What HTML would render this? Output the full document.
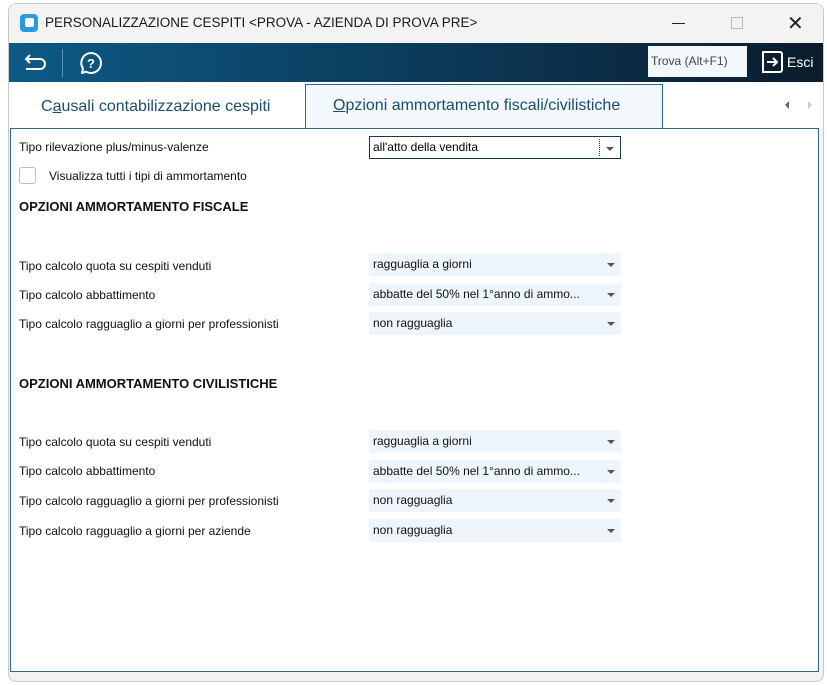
<!DOCTYPE html>
<html><head><meta charset="utf-8"><style>
body{margin:0;width:827px;height:685px;background:#fff;font-family:"Liberation Sans",sans-serif;position:relative;overflow:hidden}
.win{position:absolute;left:8px;top:3px;width:814px;height:677px;border:1px solid #c8c8c8;border-radius:8px;background:#f3f3f3;overflow:hidden}
.title{position:absolute;left:0;top:0;width:814px;height:39px;background:#f3f3f3;font-size:13.5px;color:#1a1a1a}
.tb{position:absolute;left:0;top:39px;width:814px;height:39px;background:linear-gradient(90deg,#0d5a85,#0c3552 60%,#0b1b2b)}
.tabs{position:absolute;left:0;top:78px;width:814px;height:47px;background:#fff}
.panel{position:absolute;left:1px;top:124px;width:807px;height:542px;border:1px solid #2e6a80;background:#fff}
.l{position:absolute;left:8px;font-size:12px;color:#111}
.dd{position:absolute;left:358px;width:252px;height:23px;background:#eef6fc;font-size:12px;line-height:23px;padding-left:4px;box-sizing:border-box;color:#111}
.dd:after{content:"";position:absolute;right:6px;top:10px;border:4px solid transparent;border-top:4px solid #555;border-bottom:0}
.h{position:absolute;left:8px;font-size:13px;font-weight:bold;color:#111}
</style></head><body>
<div class="win">
<div class="title">
 <div style="position:absolute;left:11px;top:10px;width:18px;height:18px;background:#2a9ae0;border-radius:4px"><div style="position:absolute;left:5px;top:4px;width:9px;height:9px;background:#fff;border-radius:2px"></div></div>
 <div style="position:absolute;left:36px;top:11px">PERSONALIZZAZIONE CESPITI &lt;PROVA - AZIENDA DI PROVA PRE&gt;</div>
 <div style="position:absolute;left:663px;top:19px;width:13px;height:1px;background:#222"></div>
 <div style="position:absolute;left:722px;top:13px;width:10px;height:10px;border:1px solid #bbb"></div>
 <div style="position:absolute;left:778px;top:7px;font-size:20px;color:#222">✕</div>
</div>
<div class="tb">
 <svg style="position:absolute;left:14px;top:9px" width="26" height="22" viewBox="0 0 26 22" fill="none" stroke="#fff" stroke-width="2"><path d="M7 3 L3 7 L7 11 M3 7 H17 a5 5 0 0 1 0 10 H3"/></svg>
 <div style="position:absolute;left:53px;top:6px;width:1px;height:28px;background:#5b8fae"></div>
 <svg style="position:absolute;left:70px;top:8px" width="24" height="24" viewBox="0 0 24 24" fill="none" stroke="#fff" stroke-width="2"><path d="M12 2 a10 10 0 1 1 -5 18.7 L3 22 L4 17.5 A10 10 0 0 1 12 2 Z" stroke-linejoin="round"/><text x="8" y="17" fill="#fff" stroke="none" font-size="13" font-weight="bold" font-family="Liberation Sans">?</text></svg>
 <div style="position:absolute;left:639px;top:3px;width:99px;height:31px;background:#f0f8fe;font-size:12px;line-height:31px;padding-left:3px;box-sizing:border-box;color:#444">Trova (Alt+F1)</div>
 <svg style="position:absolute;left:751px;top:7px" width="24" height="24" viewBox="0 0 24 24" fill="none" stroke="#fff" stroke-width="2"><path d="M9 2 H3 V22 H9 M9 2 H20 a2 2 0 0 1 2 2 V20 a2 2 0 0 1 -2 2 H9"/><path d="M7 12 H17 M13 8 L17 12 L13 16"/></svg>
 <div style="position:absolute;left:778px;top:11px;color:#fff;font-size:14px">Esci</div>
</div>
<div class="tabs">
 <div style="position:absolute;left:32px;top:16px;font-size:16px;color:#1b4e6b">C<u>a</u>usali contabilizzazione cespiti</div>
 <div style="position:absolute;left:296px;top:2px;width:358px;height:46px;border:1px solid #2e6a80;border-bottom:none;background:#f2f8fc;box-sizing:border-box"><div style="position:absolute;left:27px;top:12px;font-size:16px;color:#1b4e6b"><u>O</u>pzioni ammortamento fiscali/civilistiche</div></div>
 <div style="position:absolute;left:776px;top:19px;border:4px solid transparent;border-right:4px solid #666;border-left:0"></div>
 <div style="position:absolute;left:799px;top:19px;border:4px solid transparent;border-left:4px solid #ccc;border-right:0"></div>
</div>
<div class="panel">
 <div class="l" style="top:11px">Tipo rilevazione plus/minus-valenze</div>
 <div class="dd" style="top:7px;background:#fff;border:1px solid #1a3a50;width:252px"><div style="position:absolute;right:20px;top:2px;height:17px;border-left:1px dotted #333"></div></div>
 <div style="position:absolute;left:362px;top:7px;font-size:12px;line-height:23px">all'atto della vendita</div>
 <div style="position:absolute;left:8px;top:38px;width:15px;height:15px;border:1px solid #bbb;border-radius:3px"></div>
 <div class="l" style="top:40px;left:38px">Visualizza tutti i tipi di ammortamento</div>
 <div class="h" style="top:70px">OPZIONI AMMORTAMENTO FISCALE</div>
 <div class="l" style="top:130px">Tipo calcolo quota su cespiti venduti</div><div class="dd" style="top:124px">ragguaglia a giorni</div>
 <div class="l" style="top:159px">Tipo calcolo abbattimento</div><div class="dd" style="top:154px">abbatte del 50% nel 1°anno di ammo...</div>
 <div class="l" style="top:188px">Tipo calcolo ragguaglio a giorni per professionisti</div><div class="dd" style="top:183px">non ragguaglia</div>
 <div class="h" style="top:247px">OPZIONI AMMORTAMENTO CIVILISTICHE</div>
 <div class="l" style="top:306px">Tipo calcolo quota su cespiti venduti</div><div class="dd" style="top:301px">ragguaglia a giorni</div>
 <div class="l" style="top:335px">Tipo calcolo abbattimento</div><div class="dd" style="top:331px">abbatte del 50% nel 1°anno di ammo...</div>
 <div class="l" style="top:365px">Tipo calcolo ragguaglio a giorni per professionisti</div><div class="dd" style="top:360px">non ragguaglia</div>
 <div class="l" style="top:395px">Tipo calcolo ragguaglio a giorni per aziende</div><div class="dd" style="top:390px">non ragguaglia</div>
</div>
</div>
</body></html>
